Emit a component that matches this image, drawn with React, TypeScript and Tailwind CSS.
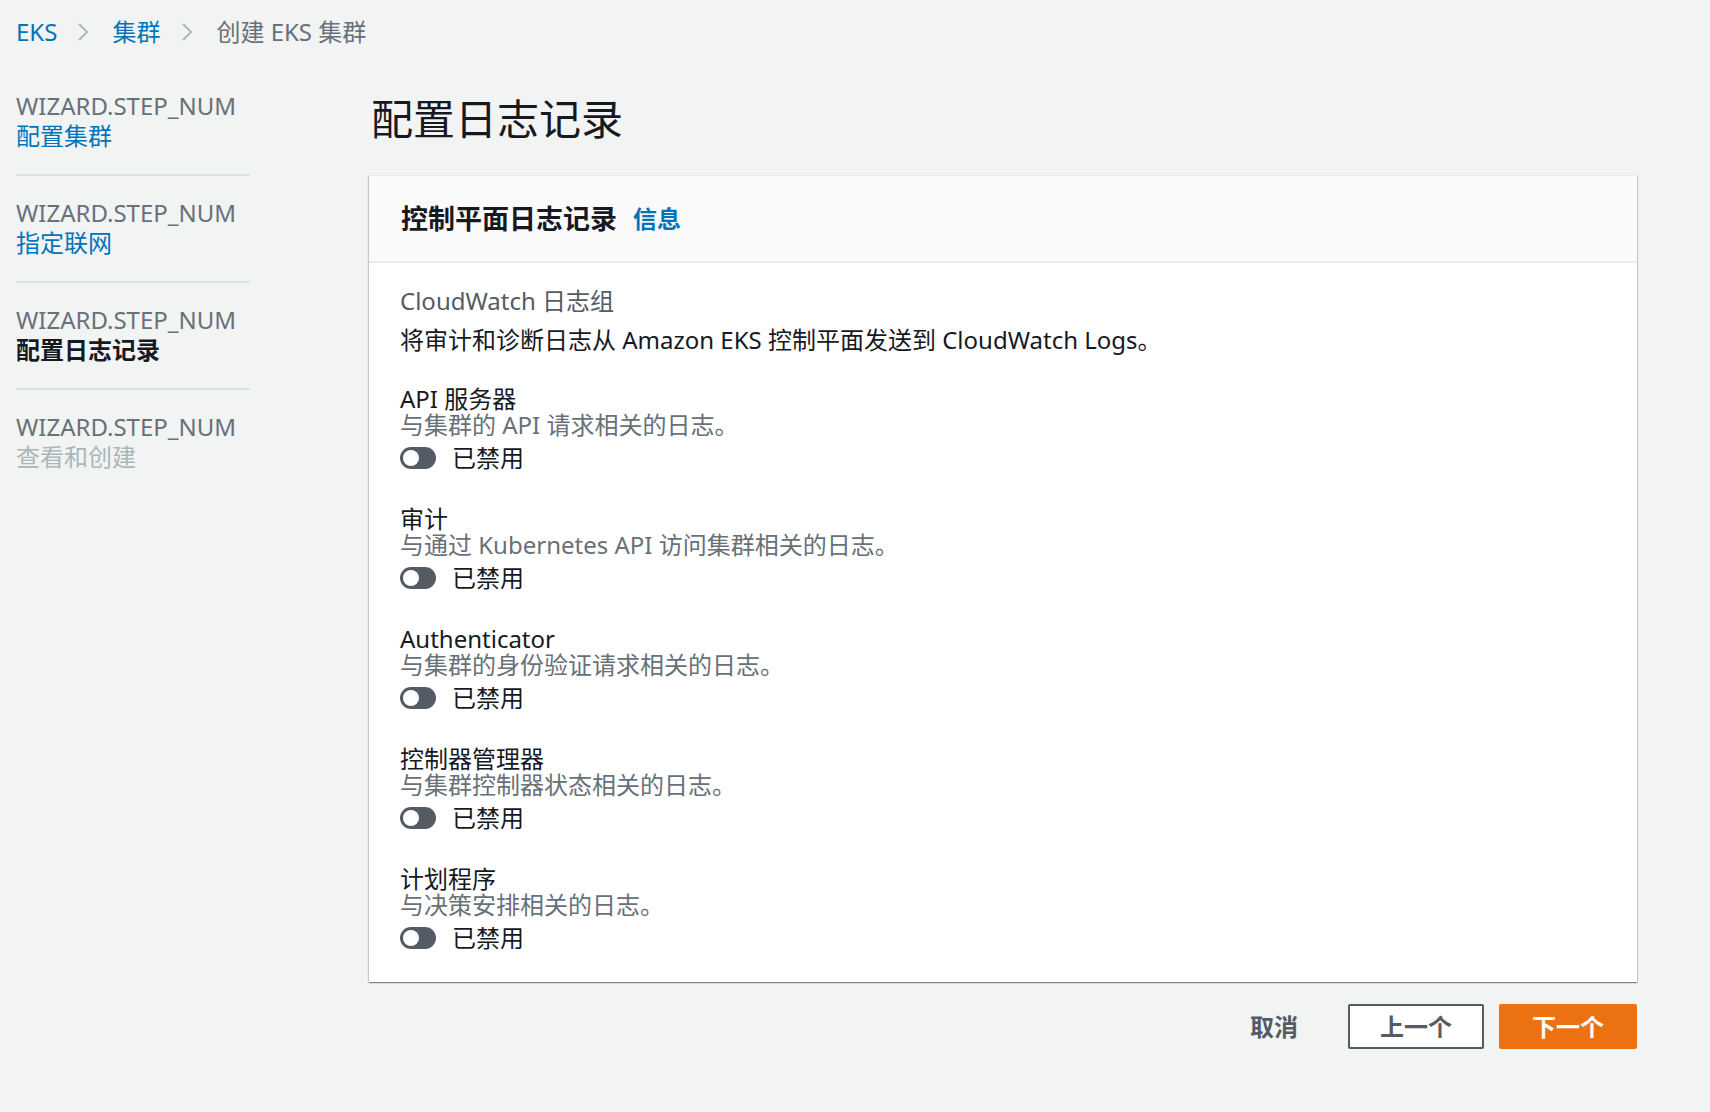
import React from 'react';

const steps = [
  { label: '配置集群', state: 'link' },
  { label: '指定联网', state: 'link' },
  { label: '配置日志记录', state: 'active' },
  { label: '查看和创建', state: 'disabled' },
];

const logTypes = [
  { name: 'API 服务器', desc: '与集群的 API 请求相关的日志。' },
  { name: '审计', desc: '与通过 Kubernetes API 访问集群相关的日志。' },
  { name: 'Authenticator', desc: '与集群的身份验证请求相关的日志。' },
  { name: '控制器管理器', desc: '与集群控制器状态相关的日志。' },
  { name: '计划程序', desc: '与决策安排相关的日志。' },
];

const Chevron = () => (
  <svg width="12" height="20" viewBox="0 0 12 20" className="shrink-0">
    <polyline points="2,2 10,10 2,18" fill="none" stroke="#aab7b8" strokeWidth="2" />
  </svg>
);

const Toggle = () => (
  <span className="relative inline-block w-[36px] h-[22px] rounded-full bg-[#545b64] shrink-0">
    <span className="absolute left-[3px] top-[3px] w-[16px] h-[16px] rounded-full bg-white" />
  </span>
);

const App: React.FC = () => {
  return (
    <div
      className="min-h-screen bg-[#f2f3f3] px-[16px] text-[#16191f]"
      style={{ fontFamily: '"Noto Sans", "Noto Sans CJK SC", sans-serif' }}
    >
      {/* Breadcrumb */}
      <nav className="flex items-center h-[47px] pt-[17px] text-[24px] leading-[30px]">
        <span className="text-[#0073bb]">EKS</span>
        <span className="ml-[20px] mr-[23px] flex items-center"><Chevron /></span>
        <span className="text-[#0073bb]">集群</span>
        <span className="ml-[21px] mr-[23px] flex items-center"><Chevron /></span>
        <span className="text-[#687078]">创建 EKS 集群</span>
      </nav>

      <div className="flex items-start mt-[44px]">
        {/* Wizard steps */}
        <ul className="w-[234px] shrink-0">
          {steps.map((s, i) => (
            <li
              key={s.label}
              className={
                (i === 0 ? 'pt-0' : 'pt-[22px]') +
                ' ' +
                (i < steps.length - 1 ? 'pb-[23px] border-b-2 border-[#dde2e2]' : '')
              }
            >
              <div className="text-[24px] leading-[30px] text-[#687078]">WIZARD.STEP_NUM</div>
              <div
                className={
                  'text-[24px] leading-[30px] ' +
                  (s.state === 'link'
                    ? 'text-[#0073bb]'
                    : s.state === 'active'
                    ? 'text-[#16191f] font-bold'
                    : 'text-[#aab7b8]')
                }
              >
                {s.label}
              </div>
            </li>
          ))}
        </ul>

        {/* Main content */}
        <main className="ml-[119px] w-[1268px]">
          <h1 className="mt-[3px] text-[42px] leading-[50px] font-normal pl-[2px]">配置日志记录</h1>

          <section className="mt-[31px] bg-white border-t border-[#eaeded] shadow-[0_1px_1px_0_rgba(0,28,36,0.3),1px_1px_1px_0_rgba(0,28,36,0.15),-1px_1px_1px_0_rgba(0,28,36,0.15)]">
            <header className="h-[87px] flex items-center px-[32px] bg-[#fafafa] border-b-2 border-[#eaeded]">
              <h2 className="text-[27px] font-bold leading-[34px]">控制平面日志记录</h2>
              <a className="ml-[16px] text-[24px] font-bold text-[#0073bb]">信息</a>
            </header>

            <div className="px-[31px] pt-[23px] pb-[29px]">
              <div className="text-[24px] leading-[30px] text-[#545b64]">CloudWatch 日志组</div>
              <p className="mt-[9px] text-[24px] leading-[30px]">
                将审计和诊断日志从 Amazon EKS 控制平面发送到 CloudWatch Logs。
              </p>

              <div className="mt-[31px] flex flex-col gap-[33px]">
                {logTypes.map((t) => (
                  <div key={t.name}>
                    <div className="text-[24px] leading-[26px]">{t.name}</div>
                    <div className="text-[24px] leading-[26px] text-[#687078]">{t.desc}</div>
                    <label className="mt-[5px] h-[30px] flex items-center gap-[16px] text-[24px]">
                      <Toggle />
                      <span>已禁用</span>
                    </label>
                  </div>
                ))}
              </div>
            </div>
          </section>

          <div className="mt-[22px] flex items-center justify-end">
            <button className="mr-[50px] text-[24px] font-bold text-[#545b64]">取消</button>
            <button className="w-[136px] h-[45px] border-2 border-[#545b64] rounded-[2px] bg-white text-[24px] font-bold text-[#545b64]">
              上一个
            </button>
            <button className="ml-[15px] w-[138px] h-[45px] rounded-[2px] bg-[#ec7211] text-[24px] font-bold text-white">
              下一个
            </button>
          </div>
        </main>
      </div>
    </div>
  );
};

export default App;
